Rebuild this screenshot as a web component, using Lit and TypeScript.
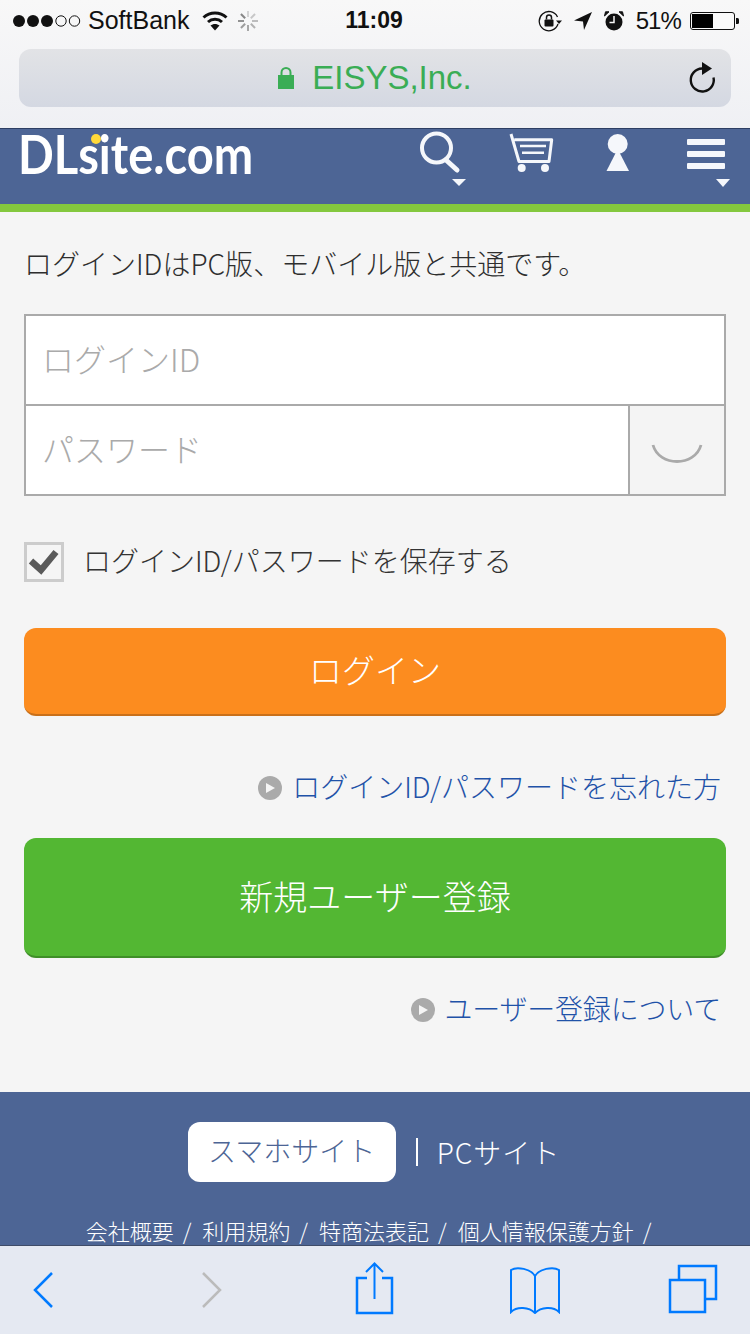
import { LitElement, html, svg, css } from "lit";
import { customElement } from "lit/decorators.js";

@customElement("app-root")
export class AppRoot extends LitElement {
  static styles = css`
    :host {
      display: flex;
      flex-direction: column;
      width: 750px;
      height: 1334px;
      overflow: hidden;
      background: #f5f5f5;
      font-family: "Noto Sans CJK JP", "Liberation Sans", sans-serif;
      font-weight: 300;
      color: #333;
    }
    svg { display: block; flex: none; }

    .chrome {
      height: 128px;
      flex: none;
      box-sizing: border-box;
      background: linear-gradient(#f8f8f8, #eff0f4);
      padding-top: 8px;
      font-family: "Liberation Sans", sans-serif;
      font-weight: 400;
    }
    .status {
      height: 25px;
      display: grid;
      grid-template-columns: 1fr auto 1fr;
      align-items: center;
      padding: 0 11px 0 13px;
      font-size: 25px;
      color: #111;
      line-height: 25px;
    }
    .s-left, .s-right { display: flex; align-items: center; }
    .s-left span { margin: 0 13px 0 7px; }
    .spin { margin-left: 10px; }
    .s-right { justify-content: flex-end; }
    .time { font-weight: 700; font-size: 23px; margin-left: -4px; }
    .pct { margin: 0 9px 0 12px; font-size: 24px; letter-spacing: -0.9px; }
    .gap { margin-left: 12px; }
    .url {
      margin: 16px 19px 0;
      height: 58px;
      border-radius: 12px;
      background: linear-gradient(#e2e3e6, #d4d8e2);
      display: grid;
      grid-template-columns: 1fr auto 1fr;
      align-items: center;
    }
    .secure {
      grid-column: 2;
      display: flex;
      align-items: center;
      gap: 18px;
      color: #3aad55;
      font-size: 33px;
    }
    .reload { grid-column: 3; justify-self: end; margin-right: 15px; }

    .head {
      flex: none;
      height: 84px;
      box-sizing: border-box;
      background: #4d6595;
      border-top: 1px solid #2d3e63;
      border-bottom: 8px solid #84c83e;
      display: flex;
      padding-left: 18px;
    }
    .logo {
      position: relative;
      width: 400px;
      height: 54px;
    }
    .logo-text {
      display: block;
      color: #fff;
      font-family: Lato, sans-serif;
      font-weight: 700;
      font-size: 54px;
      line-height: 50px;
      white-space: nowrap;
      transform: scaleX(0.872);
      transform-origin: left top;
    }
    .dot {
      position: absolute;
      left: 73px;
      top: 5px;
      width: 10px;
      height: 10px;
      border-radius: 50%;
      background: #ffd93a;
    }
    .ic-cart { margin-left: 40px; }
    .ic-key { margin-left: 51px; }
    .ic-menu { margin-left: 53px; }

    main {
      flex: 1;
      min-height: 0;
      box-sizing: border-box;
      padding: 0 24px;
      display: flex;
      flex-direction: column;
    }
    .lead {
      font-size: 28px;
      line-height: 40px;
      margin: 31px 0 0;
      color: #2e2e2e;
      white-space: nowrap;
    }
    .form {
      margin-top: 31px;
      height: 182px;
      box-sizing: border-box;
      border: 2px solid #aaa;
      background: #fff;
      display: grid;
      grid-template-columns: 1fr 96px;
      grid-template-rows: 90px 1fr;
    }
    .field {
      display: flex;
      align-items: center;
      padding: 0 0 4px 16px;
      font-size: 32px;
      color: #aaa;
    }
    .field.id { grid-column: 1 / 3; border-bottom: 2px solid #aaa; }
    .eye {
      border-left: 2px solid #aaa;
      background: #f4f4f4;
      display: flex;
      align-items: center;
      justify-content: center;
      padding-top: 8px;
    }
    .check {
      margin-top: 46px;
      display: flex;
      align-items: center;
      gap: 19px;
      font-size: 28px;
      color: #333;
      white-space: nowrap;
    }
    .check span { line-height: 36px; padding-bottom: 4px; }
    .box {
      width: 40px;
      height: 40px;
      box-sizing: border-box;
      border: 3px solid #ccc;
      display: flex;
      align-items: center;
      justify-content: center;
    }
    .btn {
      box-sizing: border-box;
      display: flex;
      align-items: center;
      justify-content: center;
      color: #fff;
      font-size: 34px;
      border-radius: 12px;
      padding-bottom: 4px;
    }
    .login {
      margin-top: 46px;
      height: 88px;
      background: #fc8c1f;
      border-bottom: 2px solid #c9701a;
      font-size: 33px;
    }
    .signup {
      margin-top: 30px;
      height: 120px;
      background: #53b733;
      border-bottom: 2px solid #3f8f28;
    }
    .link {
      display: flex;
      justify-content: flex-end;
      align-items: center;
      gap: 10px;
      font-size: 28px;
      color: #1f52a8;
      padding-right: 5px;
      white-space: nowrap;
    }
    .link span { line-height: 36px; padding-bottom: 4px; }
    .l1 { margin-top: 52px; }
    .l2 { margin-top: 32px; gap: 9px; }
    .l2 span { letter-spacing: -0.2px; }

    footer {
      flex: none;
      height: 153px;
      overflow: hidden;
      background: #4d6595;
      color: #fff;
      display: flex;
      flex-direction: column;
      align-items: center;
    }
    .switch {
      margin-top: 30px;
      display: flex;
      align-items: center;
      font-size: 28px;
      padding-right: 2px;
    }
    .sp {
      width: 208px;
      height: 60px;
      box-sizing: border-box;
      padding-bottom: 4px;
      border-radius: 12px;
      background: #fff;
      color: #4d6595;
      display: flex;
      align-items: center;
      justify-content: center;
    }
    .pc {
      margin-left: 20px;
      padding-left: 19px;
      border-left: 2px solid #fff;
      height: 28px;
      display: flex;
      align-items: center;
      letter-spacing: 1px;
      line-height: 24px;
    }
    .f-links {
      margin-top: 34px;
      font-size: 22px;
      line-height: 28px;
      white-space: nowrap;
      display: flex;
      gap: 11px;
      padding-right: 13px;
    }
    .f-item { display: flex; gap: 9px; }
    .toolbar {
      flex: none;
      height: 89px;
      box-sizing: border-box;
      background: #e5e9f2;
      border-top: 1px solid #3f4c68;
      display: flex;
      align-items: center;
      padding-left: 31px;
    }
    .t2 { margin-left: 145px; }
    .t3 { margin-left: 131px; margin-bottom: 4px; }
    .t4 { margin-left: 114px; }
    .t5 { margin-left: 107px; margin-bottom: 2px; }
  `;

  private spinner() {
    const rays = [];
    for (let i = 0; i < 8; i++) {
      const o = 0.25 + (i / 8) * 0.6;
      rays.push(svg`<rect x="9" y="0" width="2" height="6" fill="#666" opacity=${o} transform="rotate(${i * 45} 10 10)"></rect>`);
    }
    return html`<svg class="spin" width="20" height="20" viewBox="0 0 20 20">${rays}</svg>`;
  }

  private playIcon() {
    return html`<svg width="24" height="24" viewBox="0 0 24 24">
      <circle cx="12" cy="12" r="12" fill="#aaa"></circle>
      <path d="M8 7l9 5-9 5z" fill="#f5f5f5"></path>
    </svg>`;
  }

  render() {
    const links = ["会社概要", "利用規約", "特商法表記", "個人情報保護方針"];
    return html`
      <div class="chrome">
        <div class="status">
          <div class="s-left">
            <svg width="68" height="16" viewBox="0 0 68 16">
              <circle cx="6" cy="8" r="6" fill="#111"></circle>
              <circle cx="20" cy="8" r="6" fill="#111"></circle>
              <circle cx="34" cy="8" r="6" fill="#111"></circle>
              <circle cx="48" cy="8" r="5.2" fill="none" stroke="#111" stroke-width="1"></circle>
              <circle cx="61.5" cy="8" r="5.2" fill="none" stroke="#111" stroke-width="1"></circle>
            </svg>
            <span>SoftBank</span>
            <svg width="26" height="20" viewBox="0 0 26 20">
              <path d="M1.5 6.5C8 .5 18 .5 24.5 6.5" fill="none" stroke="#111" stroke-width="3"></path>
              <path d="M6 11c4-3.6 10-3.6 14 0" fill="none" stroke="#111" stroke-width="3"></path>
              <path d="M8.5 14.6c2.6-2.2 6.4-2.2 9 0L13 19.5z" fill="#111"></path>
            </svg>
            ${this.spinner()}
          </div>
          <div class="time">11:09</div>
          <div class="s-right">
            <svg width="24" height="22" viewBox="0 0 24 22">
              <path d="M19.500 7A9.600 9.600 0 1 0 20 14" fill="none" stroke="#111" stroke-width="1.300"></path>
              <path d="M18 10.500h6l-3 3.500z" fill="#111"></path>
              <rect x="6.500" y="9.500" width="9" height="7" rx="1" fill="#111"></rect>
              <path d="M8.500 9.500V7.500a2.500 2.500 0 0 1 5 0v2" fill="none" stroke="#111" stroke-width="1.500"></path>
            </svg>
            <svg class="gap" width="18" height="20" viewBox="0 0 18 20">
              <path d="M0 9.500L18 1l-8 18-1-8.500z" fill="#111"></path>
            </svg>
            <svg class="gap" width="20" height="20" viewBox="0 0 20 20">
              <circle cx="10" cy="11" r="8.500" fill="#111"></circle>
              <path d="M10 5v6.500H5.500" fill="none" stroke="#f8f8f8" stroke-width="1.500"></path>
              <path d="M0.500 5L5 0.800 1.500 .8zM19.500 5L15 .8h3.500z" fill="#111" stroke="#111"></path>
            </svg>
            <span class="pct">51%</span>
            <svg width="49" height="18" viewBox="0 0 49 18">
              <rect x="0.500" y="0.500" width="44" height="17" rx="2.500" fill="#fafafa" stroke="#111"></rect>
              <rect x="2" y="2" width="21" height="14" fill="#000"></rect>
              <path d="M46 6h1.500a1.500 1.500 0 0 1 1.500 1.500v3a1.500 1.500 0 0 1-1.500 1.500H46z" fill="#111"></path>
            </svg>
          </div>
        </div>
        <div class="url">
          <div class="secure">
            <svg width="16" height="22" viewBox="0 0 16 22">
              <rect x="0" y="8" width="16" height="14" fill="#3aad55"></rect>
              <path d="M3.500 9V5.500a4.500 4.500 0 0 1 9 0V9" fill="none" stroke="#3aad55" stroke-width="2"></path>
            </svg>
            <span>EISYS,Inc.</span>
          </div>
          <svg class="reload" width="28" height="32" viewBox="0 0 28 32">
            <path d="M25.500 15.500A11.500 11.500 0 1 1 14 6.500" fill="none" stroke="#111" stroke-width="2.400"></path>
            <path d="M14 0l10 6.500-10 6.500z" fill="#111"></path>
          </svg>
        </div>
      </div>

      <div class="head">
        <div class="logo"><span class="logo-text">DLsite.com</span><span class="dot"></span></div>
        <svg width="50" height="60" viewBox="418 130 50 60">
          <circle cx="436.500" cy="149" r="14.500" fill="none" stroke="#f5f7fb" stroke-width="4"></circle>
          <path d="M446 161l11 10" fill="none" stroke="#f5f7fb" stroke-width="5" stroke-linecap="round"></path>
          <path d="M452 180h14l-7 7z" fill="#f5f7fb"></path>
        </svg>
        <svg class="ic-cart" width="46" height="60" viewBox="508 130 46 60">
          <path d="M511 135l8 27.500h30l2.700-21.800h-37.400" fill="none" stroke="#f5f7fb" stroke-width="3" stroke-linejoin="round"></path>
          <path d="M520 147h26M522 153.700h22" fill="none" stroke="#f5f7fb" stroke-width="2.600"></path>
          <circle cx="521.700" cy="169" r="4" fill="#f5f7fb"></circle>
          <circle cx="545" cy="169" r="4" fill="#f5f7fb"></circle>
        </svg>
        <svg class="ic-key" width="27" height="60" viewBox="605 130 27 60">
          <circle cx="617.700" cy="145" r="10" fill="#f5f7fb"></circle>
          <path d="M617.700 150L629 172h-22.500z" fill="#f5f7fb"></path>
        </svg>
        <svg class="ic-menu" width="47" height="60" viewBox="685 130 47 60">
          <rect x="687" y="140" width="38" height="6" rx="1" fill="#f5f7fb"></rect>
          <rect x="687" y="152" width="38" height="6" rx="1" fill="#f5f7fb"></rect>
          <rect x="687" y="164" width="38" height="6" rx="1" fill="#f5f7fb"></rect>
          <path d="M716 180h14l-7 8z" fill="#f5f7fb"></path>
        </svg>
      </div>

      <main>
        <p class="lead">ログインIDはPC版、モバイル版と共通です。</p>
        <div class="form">
          <div class="field id">ログインID</div>
          <div class="field">パスワード</div>
          <div class="eye">
            <svg width="52" height="24" viewBox="0 0 52 24">
              <path d="M2 3c6 22 42 22 48 0" fill="none" stroke="#aaa" stroke-width="2.800"></path>
            </svg>
          </div>
        </div>
        <div class="check">
          <div class="box">
            <svg width="32" height="28" viewBox="0 0 32 28">
              <path d="M3 13l10 9L28 4" fill="none" stroke="#5a5a5a" stroke-width="6.500"></path>
            </svg>
          </div>
          <span>ログインID/パスワードを保存する</span>
        </div>
        <div class="btn login">ログイン</div>
        <div class="link l1">${this.playIcon()}<span>ログインID/パスワードを忘れた方</span></div>
        <div class="btn signup">新規ユーザー登録</div>
        <div class="link l2">${this.playIcon()}<span>ユーザー登録について</span></div>
      </main>

      <footer>
        <div class="switch">
          <div class="sp">スマホサイト</div>
          <div class="pc">PCサイト</div>
        </div>
        <div class="f-links">${links.map((l) => html`<div class="f-item"><span>${l}</span><span>/</span></div>`)}</div>
      </footer>

      <div class="toolbar">
        <svg width="24" height="40" viewBox="0 0 24 40">
          <path d="M21 3L4 20l17 17" fill="none" stroke="#007aff" stroke-width="2.500"></path>
        </svg>
        <svg class="t2" width="24" height="40" viewBox="0 0 24 40">
          <path d="M3 3l17 17L3 37" fill="none" stroke="#bbb" stroke-width="2.500"></path>
        </svg>
        <svg class="t3" width="40" height="54" viewBox="0 0 40 54">
          <path d="M12 17H2v35h35V17H27" fill="none" stroke="#007aff" stroke-width="2.500"></path>
          <path d="M19.500 38V3M11 11l8.500-8.500L28 11" fill="none" stroke="#007aff" stroke-width="2"></path>
        </svg>
        <svg class="t4" width="52" height="48" viewBox="0 0 52 48">
          <path d="M26 10C22 3 8 0 2 4v42c6-6 18-5 24 1 6-6 18-7 24-1V4C44 0 30 3 26 10zM26 10v37" fill="none" stroke="#007aff" stroke-width="2"></path>
        </svg>
        <svg class="t5" width="50" height="50" viewBox="0 0 50 50">
          <rect x="2" y="16" width="35" height="32" fill="none" stroke="#007aff" stroke-width="2.500"></rect>
          <path d="M11 15V2h37v33H38" fill="none" stroke="#007aff" stroke-width="2.500"></path>
        </svg>
      </div>
    `;
  }
}
